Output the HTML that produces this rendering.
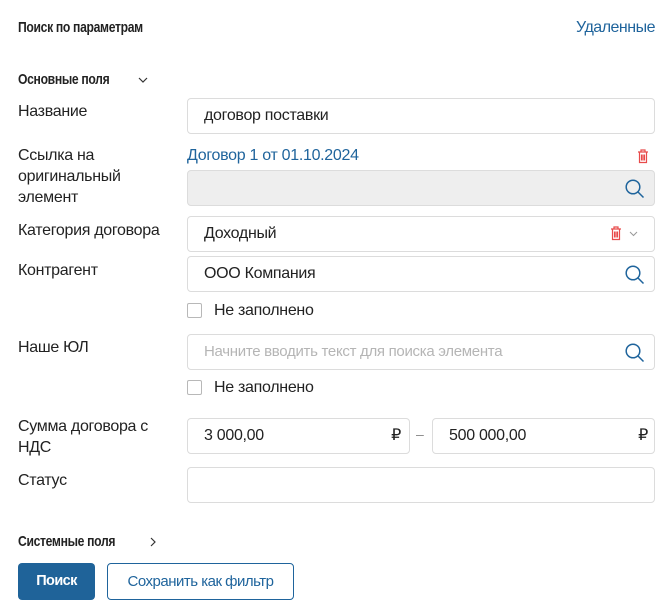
<!DOCTYPE html>
<html><head><meta charset="utf-8"><style>
body{margin:0;width:671px;height:608px;background:#fff;font-family:"Liberation Sans",sans-serif;color:#222;position:relative;overflow:hidden}
.a{position:absolute;white-space:nowrap}
.t{font-size:16px;letter-spacing:-0.3px}
.b{font-weight:bold;font-size:15px;letter-spacing:-0.4px;transform:scaleX(0.81);transform-origin:0 0}
.in{position:absolute;left:187px;width:466px;border:1px solid #dcdcdc;border-radius:4px;box-sizing:border-box;height:36px;font-size:16px;letter-spacing:-0.3px;line-height:34px;padding-left:16px;background:#fff}
.cb{position:absolute;left:187px;width:15px;height:15px;border:1px solid #b8b8b8;box-sizing:border-box;border-radius:2px}
.lk{color:#1f649c}
.s{position:absolute;right:9px;top:8px}
</style></head><body>
<div class="a b" style="left:18px;top:19px">Поиск по параметрам</div>
<div class="a t lk" style="right:16px;top:19px;letter-spacing:-0.5px">Удаленные</div>
<div class="a b" style="left:18px;top:71px">Основные поля</div>
<svg class="a" style="left:138px;top:77px" width="10" height="7"><path d="M1 1l4 4 4-4" fill="none" stroke="#333" stroke-width="1.2"/></svg>

<div class="a t" style="left:18px;top:103px">Название</div>
<div class="in" style="top:98px;width:468px">договор поставки</div>

<div class="a t" style="left:18px;top:145px;line-height:21px">Ссылка на<br>оригинальный<br>элемент</div>
<div class="a t lk" style="left:187px;top:147px">Договор 1 от 01.10.2024</div>
<svg class="a" style="left:637px;top:149px" width="12" height="15"><path d="M1 3h10M4 3V1h4v2M2.5 3.5v10h7v-10M4.5 5.5v6M6 5.5v6M7.5 5.5v6" fill="none" stroke="#e84a4a" stroke-width="1.2"/></svg>
<div class="in" style="top:170px;width:468px;background:#eeeeee"><svg class="s" width="20" height="20"><circle cx="8" cy="8" r="6.8" fill="none" stroke="#1f649c" stroke-width="1.5"/><path d="M13 13l5.5 5.5" stroke="#1f649c" stroke-width="1.5"/></svg></div>

<div class="a t" style="left:18px;top:222px">Категория договора</div>
<div class="in" style="top:216px;width:468px">Доходный
<svg class="a" style="left:422px;top:9px" width="12" height="15"><path d="M1 3h10M4 3V1h4v2M2.5 3.5v10h7v-10M4.5 5.5v6M6 5.5v6M7.5 5.5v6" fill="none" stroke="#e84a4a" stroke-width="1.2"/></svg>
<svg class="a" style="left:441px;top:14px" width="9" height="6"><path d="M1 1l3.5 3.5L8 1" fill="none" stroke="#999" stroke-width="1"/></svg></div>

<div class="a t" style="left:18px;top:262px">Контрагент</div>
<div class="in" style="top:256px;width:468px">ООО Компания<svg class="s" width="20" height="20"><circle cx="8" cy="8" r="6.8" fill="none" stroke="#1f649c" stroke-width="1.5"/><path d="M13 13l5.5 5.5" stroke="#1f649c" stroke-width="1.5"/></svg></div>
<div class="cb" style="top:303px"></div>
<div class="a t" style="left:214px;top:302px">Не заполнено</div>

<div class="a t" style="left:18px;top:339px">Наше ЮЛ</div>
<div class="in" style="top:334px;width:468px;color:#b5b5b5;font-size:15px">Начните вводить текст для поиска элемента<svg class="s" width="20" height="20"><circle cx="8" cy="8" r="6.8" fill="none" stroke="#1f649c" stroke-width="1.5"/><path d="M13 13l5.5 5.5" stroke="#1f649c" stroke-width="1.5"/></svg></div>
<div class="cb" style="top:380px"></div>
<div class="a t" style="left:214px;top:379px">Не заполнено</div>

<div class="a t" style="left:18px;top:416px;line-height:21px">Сумма договора с<br>НДС</div>
<div class="in" style="top:418px;width:223px">3 000,00<span class="a" style="right:8px;top:0">₽</span></div>
<div class="a" style="left:416px;top:426px;color:#888;font-size:14px">–</div>
<div class="in" style="top:418px;left:432px;width:223px">500 000,00<span class="a" style="right:6px;top:0">₽</span></div>

<div class="a t" style="left:18px;top:472px">Статус</div>
<div class="in" style="top:467px;width:468px"></div>

<div class="a b" style="left:18px;top:533px">Системные поля</div>
<svg class="a" style="left:150px;top:537px" width="7" height="10"><path d="M1 1l4 4-4 4" fill="none" stroke="#333" stroke-width="1.2"/></svg>

<div class="a" style="left:18px;top:563px;width:77px;height:37px;background:#1f6399;border-radius:4px;color:#fff;font-weight:bold;font-size:14.5px;letter-spacing:-0.6px;text-align:center;line-height:37px">Поиск</div>
<div class="a lk" style="left:107px;top:563px;width:187px;height:37px;box-sizing:border-box;border:1px solid #1f649c;border-radius:4px;font-size:15px;letter-spacing:-0.5px;text-align:center;line-height:35px">Сохранить как фильтр</div>
</body></html>
